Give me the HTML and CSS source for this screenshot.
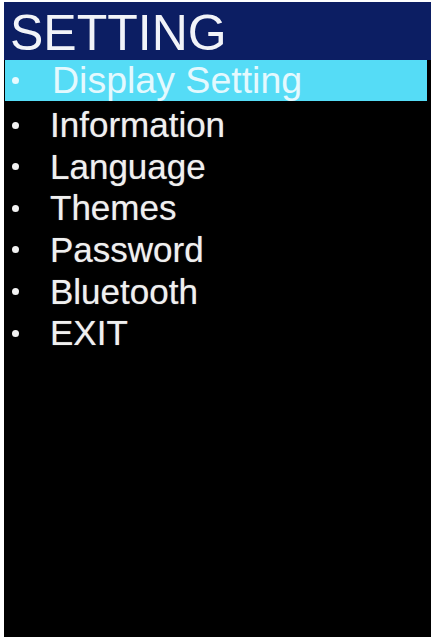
FILE: index.html
```html
<!DOCTYPE html>
<html>
<head>
<meta charset="utf-8">
<link rel="stylesheet" href="styles.css">
</head>
<body>
<div class="screen">
  <div class="header">SETTING</div>
  <ul class="menu">
    <li class="item selected"><span class="dot"></span><span class="label">Display Setting</span></li>
    <li class="rest">
      <ul class="sub">
        <li class="item"><span class="dot"></span><span class="label">Information</span></li>
        <li class="item"><span class="dot"></span><span class="label">Language</span></li>
        <li class="item"><span class="dot"></span><span class="label">Themes</span></li>
        <li class="item"><span class="dot"></span><span class="label">Password</span></li>
        <li class="item"><span class="dot"></span><span class="label">Bluetooth</span></li>
        <li class="item"><span class="dot"></span><span class="label">EXIT</span></li>
      </ul>
    </li>
  </ul>
</div>
</body>
</html>
```
FILE: styles.css
```css
html, body {
  margin: 0;
  padding: 0;
  background: #ffffff;
}
body {
  padding: 2px 2px 2px 4px;
  font-family: "Liberation Sans", Arial, sans-serif;
}
.screen {
  width: 427px;
  height: 635px;
  background: #000000;
  display: flex;
  flex-direction: column;
}
.header {
  box-sizing: border-box;
  height: 58px;
  padding: 5px 0 0 6px;
  line-height: 53px;
  font-size: 50px;
  color: #f1f3f8;
  background: #0c1e63;
  white-space: nowrap;
}
.menu, .sub {
  list-style: none;
  margin: 0;
  padding: 0;
}
.rest {
  padding-top: 3.4px;
}
.item {
  display: flex;
  align-items: center;
  height: 41.6px;
  font-size: 35px;
  color: #f0f0f0;
  white-space: nowrap;
  text-shadow: 0 0 1px rgba(255, 255, 255, 0.5);
}
.item.selected {
  height: 41px;
  margin: 0 4px 0 1px;
  font-size: 37.5px;
  background: #55dcf6;
  color: #e4f9fe;
  text-shadow: none;
}
.dot {
  width: 7px;
  height: 7px;
  border-radius: 50%;
  background: #f2f2f2;
  margin: 0 0 0 8px;
  flex: none;
}
.label {
  margin-left: 31px;
}
.selected .dot {
  margin-left: 7px;
  background: #e8fbff;
}
.selected .label {
  margin-left: 33px;
}
```
